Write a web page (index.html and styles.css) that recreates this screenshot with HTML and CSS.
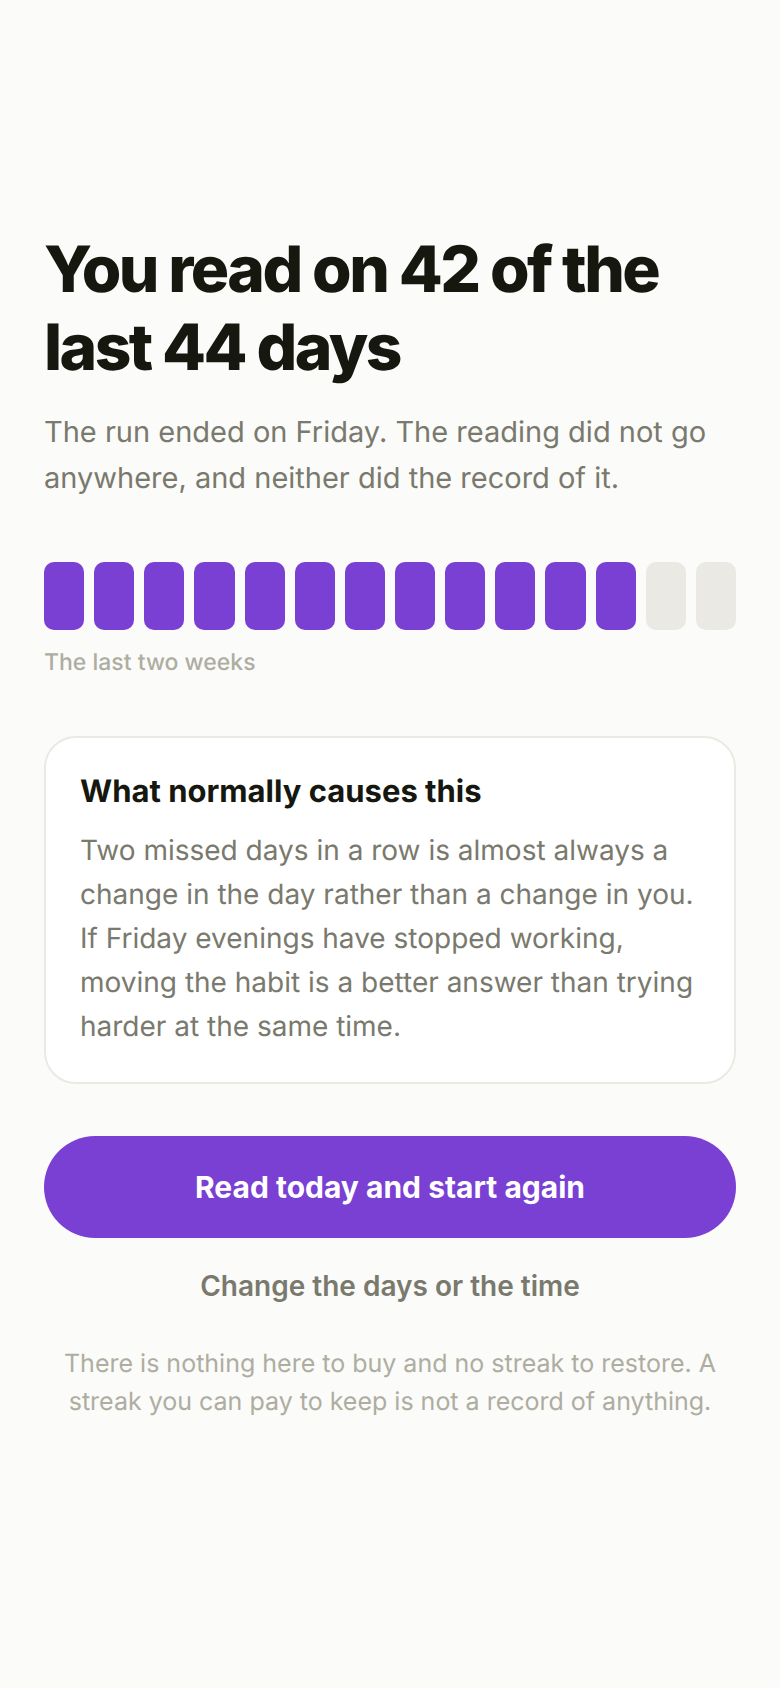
FILE: index.html
```html
<!DOCTYPE html>
<html lang="en">
<head>
  <meta charset="UTF-8">
  <meta name="viewport" content="width=device-width, initial-scale=1.0">
  <title>Reading streak</title>
  <link rel="stylesheet" href="styles.css">
</head>
<body>

  <main class="screen">
    <header class="intro">
      <h1>You read on 42 of the last 44 days</h1>
      <p>The run ended on Friday. The reading did not go anywhere, and neither did the record of it.</p>
    </header>

    <figure class="history">
      <div class="days">
        <span class="day read"></span>
        <span class="day read"></span>
        <span class="day read"></span>
        <span class="day read"></span>
        <span class="day read"></span>
        <span class="day read"></span>
        <span class="day read"></span>
        <span class="day read"></span>
        <span class="day read"></span>
        <span class="day read"></span>
        <span class="day read"></span>
        <span class="day read"></span>
        <span class="day"></span>
        <span class="day"></span>
      </div>
      <figcaption>The last two weeks</figcaption>
    </figure>

    <section class="card">
      <h2>What normally causes this</h2>
      <p>Two missed days in a row is almost always a change in the day rather than a change in you. If Friday evenings have stopped working, moving the habit is a better answer than trying harder at the same time.</p>
    </section>

    <div class="actions">
      <button type="button" class="btn btn-primary">Read today and start again</button>
      <button type="button" class="btn btn-plain">Change the days or the time</button>
    </div>

    <p class="note">There is nothing here to buy and no streak to restore. A streak you can pay to keep is not a record of anything.</p>
  </main>

</body>
</html>
```

FILE: styles.css
```css
* {
  box-sizing: border-box;
}
body {
  margin: 0;
  background-color: #fbfbf9;
  color: #16170f;
  font-family: Inter, "Liberation Sans", sans-serif;
  text-rendering: geometricPrecision;
}
h1, h2, p, figure {
  margin: 0;
}
.screen {
  min-height: 100vh;
  padding: 44px 44px 80px;
  display: flex;
  flex-direction: column;
  justify-content: center;
}
.intro h1 {
  font-size: 64px;
  line-height: 78px;
  font-weight: 800;
  letter-spacing: -0.04em;
}
.intro p {
  margin-top: 22px;
  font-size: 29px;
  line-height: 46px;
  color: #7a796e;
}
.history {
  margin-top: 61px;
}
.days {
  display: flex;
  gap: 10px;
}
.day {
  flex: 1;
  height: 68px;
  border-radius: 10px;
  background-color: #eae9e4;
}
.day.read {
  background-color: #7a3fd3;
}
.history figcaption {
  margin-top: 16px;
  font-size: 23px;
  line-height: 32px;
  font-weight: 500;
  color: #aeada1;
}
.card {
  margin-top: 58px;
  padding: 34px;
  border: 2px solid #eae9e4;
  border-radius: 32px;
  background-color: white;
}
.card h2 {
  font-size: 31px;
  line-height: 40px;
  font-weight: 700;
}
.card p {
  margin-top: 16px;
  font-size: 28px;
  line-height: 44px;
  color: #7a796e;
}
.actions {
  margin-top: 52px;
  display: flex;
  flex-direction: column;
}
.btn {
  border: 0;
  font-family: inherit;
  cursor: pointer;
}
.btn-primary {
  padding: 32px;
  border-radius: 52px;
  background-color: #7a3fd3;
  color: white;
  font-size: 30px;
  line-height: 38px;
  font-weight: 700;
}
.btn-plain {
  padding: 31px;
  background-color: transparent;
  color: #7a796e;
  font-size: 28px;
  line-height: 34px;
  font-weight: 600;
}
.note {
  margin-top: 11px;
  font-size: 25px;
  line-height: 38px;
  text-align: center;
  color: #aeada1;
}
```
